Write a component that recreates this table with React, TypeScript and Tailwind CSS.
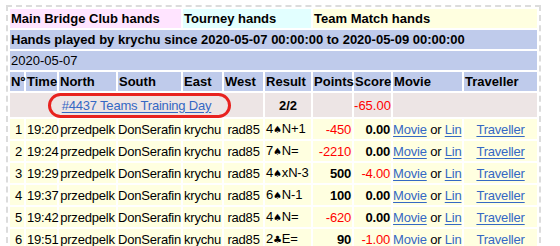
import React from "react";

type Row = { n: number; time: string; lvl: string; suit: string; res: string; pts: number; score: string };

const rows: Row[] = [
  { n: 1, time: "19:20", lvl: "4", suit: "♠", res: "N+1", pts: -450, score: "0.00" },
  { n: 2, time: "19:24", lvl: "7", suit: "♠", res: "N=", pts: -2210, score: "0.00" },
  { n: 3, time: "19:29", lvl: "4", suit: "♠", res: "xN-3", pts: 500, score: "-4.00" },
  { n: 4, time: "19:37", lvl: "6", suit: "♠", res: "N-1", pts: 100, score: "0.00" },
  { n: 5, time: "19:42", lvl: "4", suit: "♠", res: "N=", pts: -620, score: "0.00" },
  { n: 6, time: "19:51", lvl: "2", suit: "♣", res: "E=", pts: 90, score: "-1.00" },
];

const link = "text-[#3568c4] underline underline-offset-[2px]";

export default function App() {
  return (
    <div
      className="pt-[5px] pl-[6px] text-[13px] text-black bg-white"
      style={{ fontFamily: '"Liberation Sans", Arial, sans-serif' }}
    >
      <div className="relative w-[535px] border-2 border-dashed border-[#dcdcdc]">
        <table className="table-fixed border-separate border-spacing-[2px] w-[531px] leading-[19px] whitespace-nowrap">
          <colgroup>
            <col className="w-[14px]" />
            <col className="w-[31px]" />
            <col className="w-[57px]" />
            <col className="w-[63px]" />
            <col className="w-[39px]" />
            <col className="w-[39px]" />
            <col className="w-[46px]" />
            <col className="w-[39px]" />
            <col className="w-[37px]" />
            <col className="w-[69px]" />
            <col className="w-[73px]" />
          </colgroup>
          <tbody>
            <tr className="h-[19px] font-bold">
              <td colSpan={4} className="p-0 pl-px bg-[#ffe4ff]">Main Bridge Club hands</td>
              <td colSpan={3} className="p-0 pl-px bg-[#e2ffff]">Tourney hands</td>
              <td colSpan={4} className="p-0 pl-px bg-[#ffffe0]">Team Match hands</td>
            </tr>
            <tr className="h-[19px] font-bold">
              <td colSpan={11} className="p-0 pl-px bg-[#bfcbeb]">
                Hands played by krychu since 2020-05-07 00:00:00 to 2020-05-09 00:00:00
              </td>
            </tr>
            <tr className="h-[19px]">
              <td colSpan={11} className="p-0 pl-px bg-[#bfcbeb]">2020-05-07</td>
            </tr>
            <tr className="h-[19px] font-bold">
              {["Nº", "Time", "North", "South", "East", "West", "Result", "Points", "Score", "Movie", "Traveller"].map(
                (h) => (
                  <td key={h} className="p-0 pl-px bg-[#bfcbeb] overflow-visible">
                    {h}
                  </td>
                )
              )}
            </tr>
            <tr className="h-[24px] bg-transparent">
              <td colSpan={6} className="p-0 text-center bg-[#ede5e5] tracking-[-0.2px]">
                <span className={link}>#4437 Teams Training Day</span>
              </td>
              <td className="p-0 text-center font-bold bg-[#ede5e5]">2/2</td>
              <td className="p-0 bg-[#ede5e5]"></td>
              <td className="p-0 pr-px text-right text-[#ff0000] bg-[#ede5e5]">-65.00</td>
              <td colSpan={2} className="p-0 bg-[#ede5e5]"></td>
            </tr>
            {rows.map((r) => (
              <tr key={r.n} className="h-[19px] tracking-[-0.2px]">
                <td className="p-0 pr-[2px] text-right bg-[#ffffe0]">{r.n}</td>
                <td className="p-0 pl-px bg-[#ffffe0]">{r.time}</td>
                <td className="p-0 text-center bg-[#ffffe0]">przedpelk</td>
                <td className="p-0 text-center bg-[#ffffe0]">DonSerafin</td>
                <td className="p-0 text-center bg-[#ffffe0]">krychu</td>
                <td className="p-0 text-center bg-[#ffffe0]">rad85</td>
                <td className="p-0 pl-px bg-[#ffffe0]">
                  {r.lvl}
                  <span className="text-[10px]" style={{ fontFamily: '"DejaVu Sans", sans-serif' }}>
                    {r.suit}
                  </span>
                  {r.res}
                </td>
                <td
                  className={`p-0 pr-px text-right bg-[#ffffe0] ${
                    r.pts < 0 ? "text-[#ff0000]" : "font-bold"
                  }`}
                >
                  {r.pts}
                </td>
                <td
                  className={`p-0 pr-px text-right bg-[#ffffe0] ${
                    r.score.startsWith("-") ? "text-[#ff0000]" : "font-bold"
                  }`}
                >
                  {r.score}
                </td>
                <td className="p-0 bg-[#ffffe0]">
                  <span className={link}>Movie</span> or <span className={link}>Lin</span>
                </td>
                <td className="p-0 text-center bg-[#ffffe0]">
                  <span className={link}>Traveller</span>
                </td>
              </tr>
            ))}
          </tbody>
        </table>
        <div className="absolute left-[40px] top-[86px] w-[183px] h-[25px] rounded-[13px] border-[3px] border-[#e8221f] pointer-events-none" />
      </div>
    </div>
  );
}
